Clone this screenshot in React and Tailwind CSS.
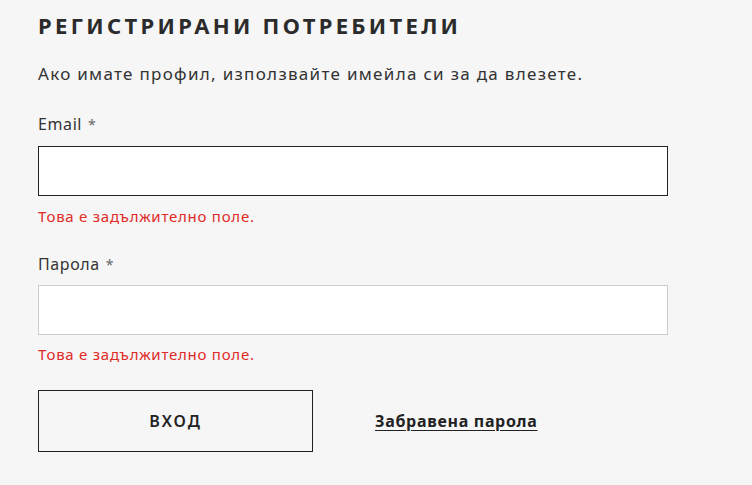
import React from "react";

export default function App() {
  return (
    <div lang="bg" className="min-h-screen w-full bg-[#f6f6f6] pl-[38px] pt-[11px] text-[#333333]" style={{ fontFamily: '"Noto Sans", "Open Sans", sans-serif' }}>
      <h2 className="text-[22px] leading-[28px] font-bold tracking-[3.3px] uppercase text-[#2b2b2b]">
        Регистрирани потребители
      </h2>
      <p className="mt-[23px] text-[17px] leading-[24px] tracking-[1.3px]">
        Ако имате профил, използвайте имейла си за да влезете.
      </p>
      <form className="w-[630px]" onSubmit={(e) => e.preventDefault()}>
        <label className="mt-[26px] block text-[16px] leading-[24px] tracking-[0.6px]">
          Email<span className="ml-[6px] text-[14px] text-[#666]">*</span>
        </label>
        <input type="email" className="mt-[9px] block h-[50px] w-[630px] border border-[#222] bg-white px-3 outline-none" />
        <div className="mt-[10px] text-[15px] leading-[20px] tracking-[0.75px] text-[#e02b27]">Това е задължително поле.</div>
        <label className="mt-[26px] block text-[16px] leading-[24px] tracking-[0.6px]">
          Парола<span className="ml-[6px] text-[14px] text-[#666]">*</span>
        </label>
        <input type="password" className="mt-[8px] block h-[50px] w-[630px] border border-[#cccccc] bg-white px-3 outline-none" />
        <div className="mt-[9px] text-[15px] leading-[20px] tracking-[0.75px] text-[#e02b27]">Това е задължително поле.</div>
        <div className="mt-[26px] flex items-center gap-[62px]">
          <button type="submit" className="h-[62px] w-[275px] border border-[#222] bg-transparent text-[16px] font-semibold tracking-[2px] text-[#222]">
            ВХОД
          </button>
          <a href="#" className="text-[16px] font-bold tracking-[0.7px] text-[#222] underline underline-offset-[3px]">
            Забравена парола
          </a>
        </div>
      </form>
    </div>
  );
}
